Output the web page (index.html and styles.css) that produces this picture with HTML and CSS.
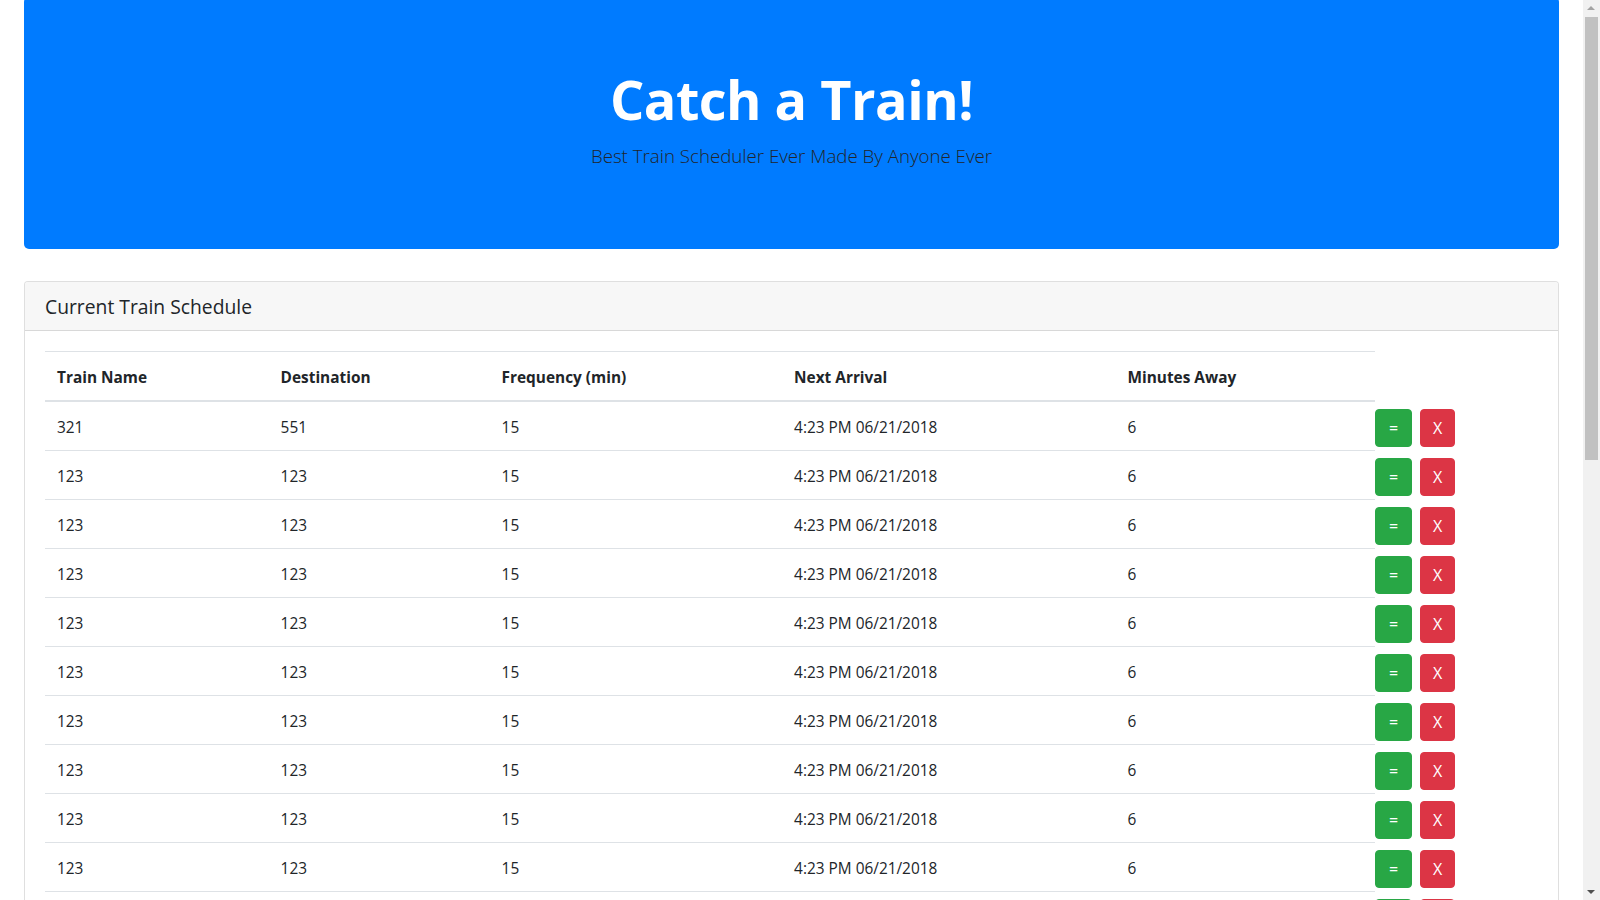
FILE: index.html
```html
<!DOCTYPE html>
<html lang="en">
<head>
<meta charset="utf-8">
<title>Train Scheduler</title>
<link rel="stylesheet" href="styles.css">
</head>
<body>
<div class="page">
  <header class="jumbotron">
    <h1 class="title">Catch a Train!</h1>
    <p class="lead">Best Train Scheduler Ever Made By Anyone Ever</p>
  </header>

  <section class="card">
    <div class="card-header"><h5 class="card-title">Current Train Schedule</h5></div>
    <div class="card-body">
      <table class="schedule">
        <colgroup>
          <col class="c1"><col class="c2"><col class="c3"><col class="c4"><col class="c5"><col class="c6">
        </colgroup>
        <thead>
          <tr><th>Train Name</th><th>Destination</th><th>Frequency (min)</th><th>Next Arrival</th><th>Minutes Away</th></tr>
        </thead>
        <tbody>
          <tr><td>321</td><td>551</td><td>15</td><td>4:23 PM 06/21/2018</td><td>6</td><td class="act"><button class="btn btn-green">=</button><button class="btn btn-red">X</button></td></tr>
          <tr><td>123</td><td>123</td><td>15</td><td>4:23 PM 06/21/2018</td><td>6</td><td class="act"><button class="btn btn-green">=</button><button class="btn btn-red">X</button></td></tr>
          <tr><td>123</td><td>123</td><td>15</td><td>4:23 PM 06/21/2018</td><td>6</td><td class="act"><button class="btn btn-green">=</button><button class="btn btn-red">X</button></td></tr>
          <tr><td>123</td><td>123</td><td>15</td><td>4:23 PM 06/21/2018</td><td>6</td><td class="act"><button class="btn btn-green">=</button><button class="btn btn-red">X</button></td></tr>
          <tr><td>123</td><td>123</td><td>15</td><td>4:23 PM 06/21/2018</td><td>6</td><td class="act"><button class="btn btn-green">=</button><button class="btn btn-red">X</button></td></tr>
          <tr><td>123</td><td>123</td><td>15</td><td>4:23 PM 06/21/2018</td><td>6</td><td class="act"><button class="btn btn-green">=</button><button class="btn btn-red">X</button></td></tr>
          <tr><td>123</td><td>123</td><td>15</td><td>4:23 PM 06/21/2018</td><td>6</td><td class="act"><button class="btn btn-green">=</button><button class="btn btn-red">X</button></td></tr>
          <tr><td>123</td><td>123</td><td>15</td><td>4:23 PM 06/21/2018</td><td>6</td><td class="act"><button class="btn btn-green">=</button><button class="btn btn-red">X</button></td></tr>
          <tr><td>123</td><td>123</td><td>15</td><td>4:23 PM 06/21/2018</td><td>6</td><td class="act"><button class="btn btn-green">=</button><button class="btn btn-red">X</button></td></tr>
          <tr><td>123</td><td>123</td><td>15</td><td>4:23 PM 06/21/2018</td><td>6</td><td class="act"><button class="btn btn-green">=</button><button class="btn btn-red">X</button></td></tr>
          <tr><td>123</td><td>123</td><td>15</td><td>4:23 PM 06/21/2018</td><td>6</td><td class="act"><button class="btn btn-green">=</button><button class="btn btn-red">X</button></td></tr>
        </tbody>
      </table>
    </div>
  </section>
</div>

<div class="scrollbar" aria-hidden="true">
  <div class="sb-arrow sb-up"></div>
  <div class="sb-track"><div class="sb-thumb"></div></div>
  <div class="sb-arrow sb-down"></div>
</div>
</body>
</html>
```

FILE: styles.css
```css
html {
  overflow: hidden;
}

body {
  margin: 0;
  font-family: "Open Sans", "Noto Sans", "DejaVu Sans", sans-serif;
  font-size: 15.4px;
  line-height: 24px;
  color: #212529;
  background: #fff;
}

.page {
  width: 1583px;
  box-sizing: border-box;
  padding: 0 24px;
}

/* Jumbotron */
.jumbotron {
  margin-top: -3px;
  background: #007bff;
  border-radius: 5px;
  padding: 70px 32px 78px;
  text-align: center;
  margin-bottom: 32px;
}

.title {
  margin: 0 0 9px;
  font-size: 54px;
  line-height: 1.2;
  font-weight: 700;
  color: #fff;
  letter-spacing: -0.5px;
}

.lead {
  margin: 0;
  font-size: 18.7px;
  line-height: 30px;
  font-weight: 300;
  color: #212529;
}

/* Card */
.card {
  border: 1px solid rgba(0, 0, 0, 0.125);
  border-radius: 4px;
  background: #fff;
}

.card-header {
  padding: 13px 20px 11px;
  background: #f7f7f7;
  border-bottom: 1px solid rgba(0, 0, 0, 0.125);
  border-radius: 3px 3px 0 0;
}

.card-title {
  margin: 0;
  font-size: 19.3px;
  line-height: 24px;
  font-weight: 400;
}

.card-body {
  padding: 20px;
}

/* Table */
.schedule {
  width: 100%;
  border-collapse: collapse;
  table-layout: fixed;
}

.c1 { width: 223.6px; }
.c2 { width: 221px; }
.c3 { width: 292.5px; }
.c4 { width: 333.4px; }
.c5 { width: 259.6px; }
.c6 { width: auto; }

.schedule th,
.schedule td {
  padding: 14px 12px 10px;
  text-align: left;
  vertical-align: top;
  border-top: 1px solid #dee2e6;
  white-space: nowrap;
}

.schedule th {
  font-weight: 700;
  border-bottom: 2px solid #dee2e6;
}

.schedule td.act {
  border: 0;
  padding: 8px 0 0;
}

.btn {
  display: inline-block;
  height: 38px;
  border: 1px solid transparent;
  border-radius: 4px;
  padding: 0;
  font-family: inherit;
  font-size: 16px;
  line-height: 36px;
  color: #fff;
  text-align: center;
  vertical-align: top;
}

.btn-green {
  width: 37px;
  background: #28a745;
  border-color: #28a745;
  margin-right: 8px;
}

.btn-red {
  width: 35px;
  background: #dc3545;
  border-color: #dc3545;
}

/* Fake window scrollbar (overlays page edge) */
.scrollbar {
  position: fixed;
  top: 0;
  right: 0;
  width: 17px;
  height: 900px;
  background: #f1f1f1;
  display: flex;
  flex-direction: column;
}

.sb-arrow {
  height: 17px;
  flex: none;
  position: relative;
}

.sb-up::after,
.sb-down::after {
  content: "";
  position: absolute;
  left: 4px;
  border-left: 4px solid transparent;
  border-right: 4px solid transparent;
}

.sb-up::after {
  top: 6px;
  border-bottom: 4px solid #a3a3a3;
}

.sb-down::after {
  top: 7px;
  border-top: 4px solid #505050;
}

.sb-track {
  flex: 1;
}

.sb-thumb {
  margin: 0 2px;
  height: 443px;
  background: #c1c1c1;
}
```
